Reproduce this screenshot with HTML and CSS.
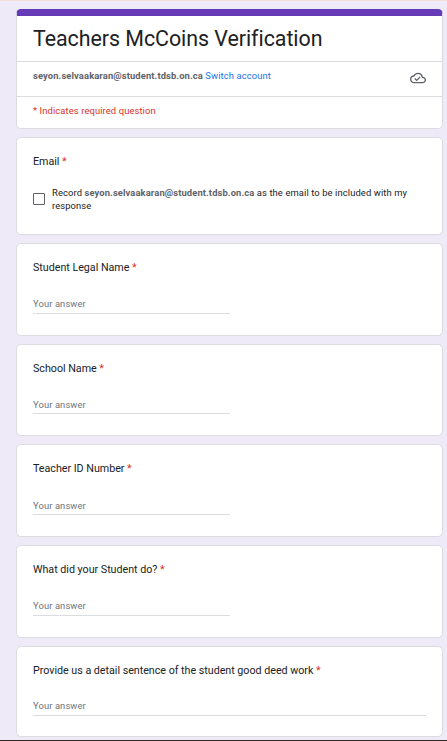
FILE: index.html
```html
<!DOCTYPE html>
<html lang="en">
<head>
<meta charset="utf-8">
<title>Teachers McCoins Verification</title>
<link rel="stylesheet" href="styles.css">
</head>
<body>
<form class="form">
  <header class="card header">
    <h1 class="title">Teachers McCoins Verification</h1>
    <div class="account">
      <p><b>seyon.selvaakaran@student.tdsb.on.ca</b> <a class="switch">Switch account</a></p>
      <svg class="cloud" viewBox="0 0 24 24"><path d="M19.35 10.04A7.49 7.49 0 0 0 12 4C9.11 4 6.6 5.64 5.35 8.04A5.994 5.994 0 0 0 0 14c0 3.31 2.69 6 6 6h13c2.76 0 5-2.24 5-5 0-2.64-2.05-4.78-4.65-4.96zM19 18H6c-2.21 0-4-1.79-4-4 0-2.05 1.53-3.76 3.56-3.97l1.07-.11.5-.95A5.469 5.469 0 0 1 12 6c2.62 0 4.88 1.86 5.39 4.43l.3 1.5 1.53.11A2.98 2.98 0 0 1 22 15c0 1.65-1.35 3-3 3zm-9-3.82l-2.09-2.09L6.5 13.5 10 17l6.01-6.01-1.41-1.41z"/></svg>
    </div>
    <p class="required">* Indicates required question</p>
  </header>
  <section class="card email">
    <h2 class="question">Email <i>*</i></h2>
    <div class="choice">
      <span class="box"></span>
      <p>Record <b>seyon.selvaakaran@student.tdsb.on.ca</b> as the email to be included with my<br>response</p>
    </div>
  </section>
  <section class="card">
    <h2 class="question">Student Legal Name <i>*</i></h2>
    <div class="answer">Your answer</div>
  </section>
  <section class="card school">
    <h2 class="question">School Name <i>*</i></h2>
    <div class="answer">Your answer</div>
  </section>
  <section class="card teacher">
    <h2 class="question">Teacher ID Number <i>*</i></h2>
    <div class="answer">Your answer</div>
  </section>
  <section class="card">
    <h2 class="question">What did your Student do? <i>*</i></h2>
    <div class="answer">Your answer</div>
  </section>
  <section class="card deed">
    <h2 class="question">Provide us a detail sentence of the student good deed work <i>*</i></h2>
    <div class="answer wide">Your answer</div>
  </section>
</form>
</body>
</html>
```
FILE: styles.css
```css
* { box-sizing: border-box; margin: 0; padding: 0; }

body {
  height: 741px;
  overflow: hidden;
  background: #eeeaf8;
  border-top: 1px solid #f6ddd5;
  border-bottom: 1px solid #33261f;
  font-family: Roboto, "Liberation Sans", sans-serif;
  font-size: 9.38px;
  letter-spacing: 0.11px;
  color: #202124;
}

.form {
  display: flex;
  flex-direction: column;
  gap: 8px;
  padding: 8px 4px 0 16px;
}

.card {
  height: 93px;
  padding: 18px 16px 0;
  background: #fff;
  border: 1px solid #dadce0;
  border-radius: 5px;
}

.header {
  height: 120px;
  padding: 0;
  border-top: 7px solid #673ab7;
  overflow: hidden;
}

.title {
  height: 46px;
  padding: 9px 16px 0;
  border-bottom: 1px solid #dadce0;
  font-size: 21.4px;
  font-weight: 400;
  line-height: 28px;
  letter-spacing: -0.04px;
}

.account {
  display: flex;
  justify-content: space-between;
  height: 35px;
  padding: 7px 16px 0;
  border-bottom: 1px solid #dadce0;
  line-height: 14px;
}

b { color: #5f6368; font-weight: 700; }
.switch { color: #1a73e8; }

.cloud {
  width: 16px;
  height: 16px;
  margin-top: 1px;
  fill: #5f6368;
}

.required {
  padding: 7px 16px 0;
  line-height: 14px;
  color: #d93025;
}

.email { height: 98px; }

.question {
  height: 13px;
  font-size: 10.72px;
  font-weight: 400;
  line-height: 12px;
  letter-spacing: -0.02px;
  white-space: nowrap;
}

.question i { color: #d93025; font-style: normal; }

.choice {
  display: flex;
  align-items: center;
  gap: 7px;
  margin-top: 17px;
  line-height: 13px;
  white-space: nowrap;
}

.box {
  width: 12px;
  height: 12px;
  border: 1px solid #5f6368;
  border-radius: 1px;
}

.answer {
  width: 197px;
  height: 17px;
  margin-top: 22px;
  border-bottom: 1px solid #dadce0;
  color: #70757a;
  line-height: 14px;
}

.school { height: 92px; }
.school .answer { height: 16px; }
.teacher .answer { margin-top: 23px; height: 16px; }
.deed { height: 91px; }
.wide { width: 100%; margin-top: 21px; }
```
